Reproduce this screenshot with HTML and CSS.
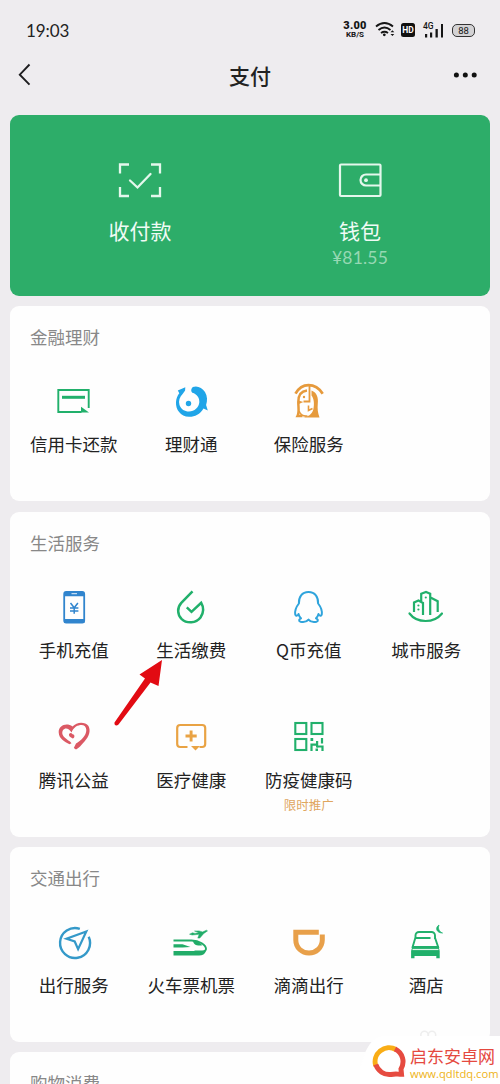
FILE: index.html
```html
<!DOCTYPE html>
<html lang="zh-CN">
<head>
<meta charset="utf-8">
<title>支付</title>
<link rel="stylesheet" href="styles.css">
</head>
<body>
<div class="screen">
  <header class="status">
    <span class="clock">19:03</span>
    <div class="indicators">
      <div class="speed"><b>3.00</b><span>KB/S</span></div>
      <svg class="wifi" width="20" height="16" viewBox="374 23 20 16" fill="none" stroke="#151515" stroke-width="1.9"><path d="M375 27.5Q383.500 20.500 392 27.500M377.500 31Q383.500 26 389.500 31M380 34Q383.500 31.500 387 34"/><circle cx="383.300" cy="35.800" r="1.400" fill="#151515" stroke="none"/><path d="M389.500 33.300l1.900-2 1.900 2zM389.500 35l1.900 2 1.900-2z" fill="#151515" stroke="none"/></svg>
      <span class="hd">HD</span>
      <div class="signal"><span class="net">4G</span><svg width="20" height="15" viewBox="423 23 20 15" fill="#151515"><path d="M425 34h2.200v3.500H425zM430 32.500h2.200v5H430zM435.500 29h2.300v8.500h-2.300zM441 24h2.200v13.500H441z"/></svg></div>
      <span class="battery">88</span>
    </div>
  </header>
  <nav class="bar">
    <svg width="20" height="24" viewBox="15 63 20 24" fill="none" stroke="#1d1d1f" stroke-width="1.900"><path d="M29.500 64.500L19.800 74.700l9.700 10"/></svg>
    <h1>支付</h1>
    <svg width="26" height="8" viewBox="452 71 26 8" fill="#111"><circle cx="456.400" cy="75" r="2.500"/><circle cx="465.300" cy="75" r="2.500"/><circle cx="474.200" cy="75" r="2.500"/></svg>
  </nav>
  <main>
    <section class="wallet">
      <div class="pay">
        <svg width="50" height="44" viewBox="115 158 50 44" fill="none" stroke="#e4f7ec" stroke-width="2.300"><path d="M120 173.500V164.500H129M151 164.500h9v9M160 187v9h-9M129 196h-9v-9"/><path d="M130 180.500l7.500 7 13-13.500" stroke-linecap="round"/></svg>
        <span class="label">收付款</span>
      </div>
      <div class="pay">
        <svg width="50" height="44" viewBox="335 158 50 44" fill="none" stroke="#e4f7ec" stroke-width="2.200"><rect x="340" y="164.500" width="40.500" height="31.500" rx="1"/><path d="M380.500 174.500h-14.500a5.500 5.500 0 0 0 0 11h14.500"/><circle cx="366" cy="180.200" r="1.900" fill="#e4f7ec" stroke="none"/></svg>
        <span class="label">钱包</span>
        <span class="amount">¥81.55</span>
      </div>
    </section>

    <section class="card">
      <h2>金融理财</h2>
      <div class="grid">
        <div class="item"><svg class="icon green" viewBox="54 382 40 40"><path d="M81.500 413H58.300V391H88.700V409" stroke-width="1.900"/><path d="M62 398.300H85" stroke-width="3"/><path d="M81 407.800l8 5.700h-8z" fill="currentColor" stroke="none"/></svg><span>信用卡还款</span></div>
        <div class="item"><svg class="icon" viewBox="171.500 382 40 40" fill="#20a5e8"><path d="M178.300 391.500L185.800 388.300 185.600 391.500 183.500 394.500C180 398 178.800 402 180 406 181.500 410.500 185.500 412.600 189.500 412.500 195 412.300 199.300 408.500 199.800 403.500 200.300 399 197.500 395 192.800 393.700 191.200 392.500 191.300 389.500 193.300 387.900 198 386.300 202.500 388.500 205.500 393 208 397 208 402 206.600 406L208.300 411.500 204 409.500C200.500 415.500 195 418 189.500 417.800 181 417.500 176 410.500 176.500 403 176.700 399.500 178 396.500 179.800 394.200z"/><circle cx="189" cy="404.500" r="2.700"/></svg><span>理财通</span></div>
        <div class="item"><svg class="icon" viewBox="289 382 40 40" fill="none" stroke="#e69a3c"><path d="M295.500 394.700C299 388.500 303 386.200 308.500 386.200S319 389 322.700 394.700" stroke-width="2.700"/><path d="M302.500 417H297.500C299.500 413 298.300 409 298.300 403 298.300 395.500 302 392 307 391.500" stroke-width="2.500"/><path d="M309.500 387V402.500H303.500" stroke-width="1.800"/><path d="M311.500 391.500C317 393.500 318.500 399 317.800 404.500 317.300 409.500 317.800 414 319.500 418.500H302.500C308 418 312 415.500 313.300 410.500 314.500 405 314 399.500 311.500 396.500z" fill="#e69a3c" stroke="none"/><path d="M298.500 401.500l4.800 1.400-4.500 2z" fill="#e69a3c" stroke="none"/><circle cx="304" cy="398" r="1.200" fill="#e69a3c" stroke="none"/><path d="M308.500 406.500v5l4-2M299 412c1.500 4 4.500 5.500 8.500 5" stroke-width="1.600"/></svg><span>保险服务</span></div>
      </div>
    </section>

    <section class="card tall">
      <h2>生活服务</h2>
      <div class="grid">
        <div class="item"><svg class="icon" viewBox="54 587 40 40" fill="none" stroke="#3185ce"><rect x="64.200" y="592" width="20" height="30.500" rx="2" stroke-width="1.800"/><path d="M64 592.800h20.400v3.500H64zM64 619h20.400v4H64z" fill="#3185ce" stroke="none"/><path d="M71.500 593.700h5.500" stroke="#e5f0fa" stroke-width="1"/><path d="M70.500 603l3.700 4.700 3.700-4.700M74.200 607.500v6.300M70 608h8.400M70 611h8.400" stroke-width="1.500"/></svg><span>手机充值</span></div>
        <div class="item"><svg class="icon green" viewBox="171.500 587 40 40"><path d="M193 591.300L181.800 602.800C177.500 607.500 177.700 614.500 182 618.800 187.500 624 196.500 623.300 201 617.500 204.300 612.500 204.200 607 201.700 602.800L192 611.800 187.300 607.300" stroke-width="2.500"/></svg><span>生活缴费</span></div>
        <div class="item"><svg class="icon" viewBox="289 587 40 40" fill="none" stroke="#2fa4dc" stroke-width="2" stroke-linejoin="round"><path d="M308.500 592C301.800 592 298.700 597 298.900 603.500 296.500 606.500 294.700 610.200 295.200 614.300 295.700 616.500 297.800 615.800 298.500 614 299 616 299.800 617.200 301 618.300 299 619.200 298.200 621 300.500 621.700 303.500 622.300 307 621.500 308.500 619.600 310 621.500 313.500 622.300 316.500 621.700 318.800 621 318 619.200 316 618.300 317.200 617.200 318 616 318.500 614 319.200 615.800 321.300 616.500 321.800 614.300 322.300 610.200 320.500 606.500 318.100 603.500 318.300 597 315.200 592 308.500 592z"/></svg><span>Q币充值</span></div>
        <div class="item"><svg class="icon green" viewBox="406.500 587 40 40" stroke-width="2.200"><path d="M410 613.500C417.500 623.500 434.500 623.500 442.500 613.500" stroke-linecap="round"/><path d="M414.500 612V602.500L419 600.500 423.500 603V615M421.700 601V593.700L426.500 592 430.700 593.700V615M431 597.500l7.200 3.700V612"/><g fill="currentColor" stroke="none"><circle cx="418.900" cy="605.500" r="1.100"/><circle cx="418.900" cy="609.500" r="1.100"/><circle cx="426.300" cy="597.500" r="1.100"/></g></svg><span>城市服务</span></div>
        <div class="item"><svg class="icon" viewBox="54 717 40 40" fill="#db5964"><path d="M72.500 726.500C77 721.500 85 721.500 88.500 726 91 731 89 736.500 84.500 741.500 81.500 745 78.500 748.500 76 749.500L73.800 748 76 743.500C81.500 740 86.300 735.500 86.300 730 86.300 725 81.500 723.500 76 726.500 73.500 728.500 72.500 730 71.500 732.500 69 728.500 65.500 727 63 730 60.500 734.500 64.500 738 70 741.500L71.500 743.200 69.500 744.200C64.500 741.500 59 739 58.700 732.500 58.300 725.500 66.500 722 72.500 726.500z"/><path d="M70.300 737c-2-1.600-1.500-3.800.4-4 1.500 0 1.400 1.500 2.700 1.500 1.500.5 1.400 3.800-.7 4z"/></svg><span>腾讯公益</span></div>
        <div class="item"><svg class="icon" viewBox="171.500 717 40 40" fill="none" stroke="#e9a344" stroke-width="2.200"><path d="M188 747h-7.300a3 3 0 0 1-3-3V728a3 3 0 0 1 3-3h22a3 3 0 0 1 3 3v16a3 3 0 0 1-3 3H200"/><path d="M186 736h11.200M191.600 730.500v11" stroke-width="2.900"/><path d="M191.500 746h9l-4.500 4.500z" fill="#e9a344" stroke="none"/></svg><span>医疗健康</span></div>
        <div class="item"><svg class="icon green" viewBox="289 717 40 40" stroke-width="2.100"><rect x="295.300" y="723" width="11" height="11"/><rect x="311.500" y="723" width="11" height="11"/><rect x="295.300" y="739" width="11" height="11"/><path d="M311.500 743.500v7.500M322 738v5.500M311 744.700h5.500M317 746.500h5.500v4.500" stroke-width="2.200"/><path d="M310.500 738h2.700v3h-2.700zM316 741h2.200v6.500h-2.200zM315.500 748.500h2.500v2.500h-2.500z" fill="currentColor" stroke="none"/></svg><span>防疫健康码</span><small>限时推广</small></div>
      </div>
    </section>

    <section class="card">
      <h2>交通出行</h2>
      <div class="grid">
        <div class="item"><svg class="icon" viewBox="54 921 40 40" fill="none" stroke="#3499c9"><path d="M79.800 927.800A15 15 0 1 0 88.700 935.800" stroke-width="2.400"/><path d="M86.300 930.500L66.500 937.800l8.200 2.700 3.400 7.700z" stroke-width="2.200"/></svg><span>出行服务</span></div>
        <div class="item"><svg class="icon" viewBox="171.500 921 40 40" fill="none" stroke="#21ac68" stroke-width="1.900"><path d="M174 939.500h18C200 939.500 206.500 944 206.500 948c0 1.800-3 2.500-6 2.500H195"/><path d="M174 943.300h9l8 2.600-8 .6h-9zM193.500 940c4 .2 7.500 2 9.500 4.200-5 1.200-9-.5-9.500-4.200zM174 950h32.500c-1 3-3.500 4.500-7 4.500H174z" fill="#21ac68" stroke="none"/><path d="M190 933.200l3-1.400 2.500.6 3.800-.8-4.300-1.600 4.500-.1 3.500 1 4-1.700 1 .7-3.700 2.500-4 4.700h-2l1.400-3.800-7 .7z" fill="#21ac68" stroke="#21ac68" stroke-width=".5"/></svg><span>火车票机票</span></div>
        <div class="item"><svg class="icon" viewBox="289 921 40 40" fill="none" stroke="#e8a04a" stroke-width="5"><path d="M318.800 931.300H295.800V939C295.800 947 302 952 309 952S322.200 946.500 322.300 939V933.500"/></svg><span>滴滴出行</span></div>
        <div class="item"><svg class="icon green" viewBox="406.500 921 40 40" stroke-width="1.900"><path d="M416 938v-3.500a3.500 3.500 0 0 1 3.500-3.500h12.500a3.500 3.500 0 0 1 3.500 3.500v3.500M416.500 937h14.500M415.800 937l-3 10M435.600 937l3.400 10"/><path d="M413 945h26l1.200 5v7.300h-3.400v-2.200H415v2.200h-3.400V950z" fill="currentColor" stroke="none"/><path d="M413 948.500h26" stroke="#dff7e9" stroke-width="1.200"/><path d="M439.500 924c-4 2.500-3 7.800 3.500 8-3.500-1.400-4.800-4.500-3.500-8z" fill="currentColor" stroke="#21b573" stroke-width=".8"/></svg><span>酒店</span></div>
      </div>
    </section>

    <section class="card">
      <h2>购物消费</h2>
    </section>
  </main>
  <aside class="brand">
    <svg class="ghost" width="20" height="9" viewBox="0 0 20 9" fill="none" stroke="#eeeeee" stroke-width="1.500"><circle cx="5.500" cy="6" r="3.700"/><circle cx="13" cy="6" r="3.700"/></svg>
    <svg class="shape" width="140" height="48" viewBox="360 1036 140 48"><path d="M360 1084V1068C365 1052 369 1037 385 1036H500V1084z" fill="#fff"/></svg>
    <div class="brand-row">
      <svg width="34" height="34" viewBox="372 1044 34 34" fill="none" stroke-width="5"><path d="M375.800 1066A14 14 0 0 1 396 1049.500" stroke="#f9ad16"/><path d="M395 1049C403 1053 405 1062 401 1069L401.500 1074.300C397 1074.300 396.500 1073.500 391 1074.500 384 1075.300 378 1071 375.800 1064.500" stroke="#e64b40"/></svg>
      <div class="brand-text"><strong>启东安卓网</strong><span>www.qdltdq.com</span></div>
    </div>
  </aside>
  <svg class="pointer" width="52" height="70" viewBox="112 657 52 70"><path d="M162 660L139.500 674.500 145 678.500 114.500 722.500C114 725.500 116.500 726.500 118.500 724.500L150.500 682.500 158.500 686z" fill="#e20b13"/></svg>
</div>
</body>
</html>
```
FILE: styles.css
```css
* { box-sizing: border-box; }
body {
  margin: 0;
  background: #eeecef;
  font-family: "Noto Sans CJK SC", sans-serif;
  color: #222;
}
.screen { position: relative; height: 1084px; overflow: hidden; }
svg { display: block; flex: none; }

.status {
  height: 50px;
  padding: 10px 25px 0 26px;
  display: flex;
  align-items: center;
  justify-content: space-between;
}
.clock { font-family: Lato, sans-serif; font-size: 17px; letter-spacing: -.1px; }
.indicators { display: flex; align-items: center; color: #151515; }
.speed {
  display: flex;
  flex-direction: column;
  align-items: center;
  width: 24px;
  margin-right: 8px;
  font-family: Roboto, sans-serif;
  font-weight: 700;
}
.speed b { font-size: 11px; line-height: 10px; letter-spacing: .2px; }
.speed span { font-size: 8px; line-height: 8px; }
.hd {
  width: 14px;
  height: 14px;
  margin: 0 8px 0 6px;
  border-radius: 2.5px;
  background: #111;
  color: #fff;
  font: 700 8.5px/14px Roboto, sans-serif;
  text-align: center;
}
.signal { position: relative; }
.net { position: absolute; left: 0; top: -1px; font: 500 8.5px/9px Roboto, sans-serif; }
.battery {
  width: 23px;
  height: 13px;
  margin-left: 9px;
  border: 1.5px solid #333;
  border-radius: 5px;
  background: #d3d2d4;
  font: 400 9.5px/11px Roboto, sans-serif;
  text-align: center;
}

.bar {
  height: 50px;
  padding: 0 22px 0 15px;
  display: grid;
  grid-template-columns: 26px 1fr 26px;
  align-items: center;
}
.bar h1 { margin: 0 0 0 7px; font-size: 21px; font-weight: 500; line-height: 30px; text-align: center; }

main { padding: 15px 10px 0; }
.wallet {
  height: 181px;
  padding-top: 43px;
  border-radius: 9px;
  background: #2dad69;
  color: #f0fbf5;
  display: flex;
  justify-content: center;
  gap: 120px;
}
.pay { width: 100px; display: flex; flex-direction: column; align-items: center; }
.label { margin-top: 12px; font-size: 21px; line-height: 32px; }
.amount { color: #96d8b3; font: 17.5px/24px Lato, sans-serif; letter-spacing: .2px; }

.card {
  height: 195px;
  margin-top: 10.3px;
  padding: 19px 5px 0;
  border-radius: 9px;
  background: #fefefe;
}
.tall { height: 325px; }
.card h2 { margin: 0 15px 32px; color: #888; font-size: 17.5px; font-weight: 400; line-height: 24px; }
.grid { display: grid; grid-template-columns: repeat(4, 1fr); grid-auto-rows: 119px; row-gap: 11px; }
.item { display: flex; flex-direction: column; align-items: center; font-size: 17.5px; line-height: 24px; white-space: nowrap; }
.icon { width: 40px; height: 40px; margin-bottom: 11px; }
.green { color: #21b06b; fill: none; stroke: currentColor; }
.item small { margin-top: 5px; color: #e0a65e; font-size: 12.5px; line-height: 16px; }

.pointer { position: absolute; left: 112px; top: 657px; }
.brand { position: absolute; right: 0; bottom: 0; width: 140px; height: 48px; }
.shape { position: absolute; left: 0; top: 0; }
.ghost { position: absolute; left: 59px; top: -7px; }
.brand-row { position: relative; display: flex; gap: 4px; padding: 8px 0 0 12px; }
.brand-text { display: flex; flex-direction: column; white-space: nowrap; }
.brand-text strong { color: #e5493f; font-size: 17px; font-weight: 400; line-height: 24px; }
.brand-text span { color: #eeb320; font: 11.2px/12px "Open Sans", sans-serif; }
```
